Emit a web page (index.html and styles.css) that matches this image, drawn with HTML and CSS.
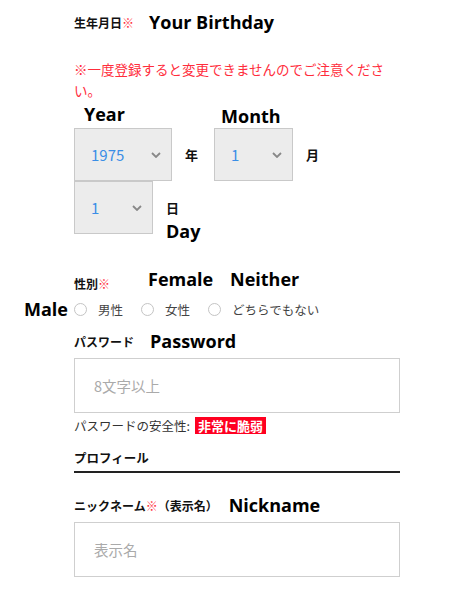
FILE: index.html
```html
<!DOCTYPE html>
<html lang="ja">
<head>
    <meta charset="UTF-8">
    <meta name="viewport" content="width=device-width, initial-scale=1.0">
    <title>会員登録</title>
    <link rel="stylesheet" href="styles.css">
</head>
<body>

<div class="form">
    <!-- birthday -->
    <div class="label-row">
        <span class="field-label">生年月日<span class="req">※</span></span>
        <span class="note-en birthday-en">Your Birthday</span>
    </div>
    <p class="warning">※一度登録すると変更できませんのでご注意ください。</p>

    <div class="date-row">
        <div class="date-group">
            <span class="note-en over year-en">Year</span>
            <div class="select wide"><span>1975</span>
                <svg width="10" height="6" viewBox="0 0 10 6"><path d="M1 1l4 4 4-4" fill="none" stroke="#888" stroke-width="1.8"/></svg>
            </div>
            <span class="unit">年</span>
        </div>
        <div class="date-group">
            <span class="note-en over month-en">Month</span>
            <div class="select"><span>1</span>
                <svg width="10" height="6" viewBox="0 0 10 6"><path d="M1 1l4 4 4-4" fill="none" stroke="#888" stroke-width="1.8"/></svg>
            </div>
            <span class="unit">月</span>
        </div>
        <div class="date-group">
            <div class="select"><span>1</span>
                <svg width="10" height="6" viewBox="0 0 10 6"><path d="M1 1l4 4 4-4" fill="none" stroke="#888" stroke-width="1.8"/></svg>
            </div>
            <span class="unit">日<span class="note-en under">Day</span></span>
        </div>
    </div>

    <!-- gender -->
    <div class="label-row gender-label">
        <span class="field-label">性別<span class="req">※</span></span>
    </div>
    <div class="radio-row">
        <label class="radio"><span class="note-en male-en">Male</span><span class="circle"></span>男性</label>
        <label class="radio"><span class="note-en female-en">Female</span><span class="circle"></span>女性</label>
        <label class="radio"><span class="note-en neither-en">Neither</span><span class="circle"></span>どちらでもない</label>
    </div>

    <!-- password -->
    <div class="label-row pw-label">
        <span class="field-label">パスワード</span>
        <span class="note-en pw-en">Password</span>
    </div>
    <div class="text-input"><span class="placeholder">8文字以上</span></div>
    <div class="strength">パスワードの安全性: <span class="badge">非常に脆弱</span></div>

    <!-- profile -->
    <h3 class="section-title">プロフィール</h3>

    <div class="label-row nick-label">
        <span class="field-label">ニックネーム<span class="req">※</span>（表示名）</span>
        <span class="note-en nick-en">Nickname</span>
    </div>
    <div class="text-input"><span class="placeholder">表示名</span></div>
</div>

</body>
</html>
```

FILE: styles.css
```css
* {
    margin: 0;
    padding: 0;
    box-sizing: border-box;
    font-family: "Noto Sans CJK JP", "Noto Sans", sans-serif;
}

body {
    background: #fff;
    color: #222;
}

.form {
    width: 400px;
    padding-left: 74px;
}

.label-row {
    display: flex;
    align-items: center;
    height: 24px;
    margin-top: 10px;
}

.field-label {
    font-size: 12px;
    font-weight: bold;
    color: #111;
}

.req {
    color: #ff2d3c;
    font-weight: normal;
}

/* english annotations */
.note-en {
    font-family: "Open Sans", "Noto Sans", sans-serif;
    font-weight: bold;
    font-size: 18px;
    line-height: 22px;
    color: #000;
    white-space: nowrap;
}

.birthday-en { margin-left: 15px; }
.pw-en { margin-left: 16px; }
.nick-en { margin-left: 11px; }

.warning {
    margin-top: 25px;
    font-size: 13.5px;
    line-height: 21px;
    color: #ff2d3c;
    padding-right: 10px;
}

.date-row {
    display: flex;
    flex-wrap: wrap;
    column-gap: 16px;
    margin-top: 27px;
}

.date-group {
    position: relative;
    display: flex;
    align-items: center;
}

.note-en.over {
    position: absolute;
    top: -25px;
    left: 10px;
}

.note-en.month-en {
    top: -23px;
    left: 7px;
}

.select {
    display: flex;
    align-items: center;
    justify-content: space-between;
    width: 79px;
    height: 53px;
    padding: 0 10px 0 16px;
    background: #ececec;
    border: 1px solid #c9c9c9;
    font-size: 15px;
    color: #3a8ee6;
}

.select.wide { width: 98px; }

.unit {
    position: relative;
    margin-left: 13px;
    font-size: 13px;
    font-weight: bold;
    color: #111;
}

.note-en.under {
    position: absolute;
    left: 0;
    top: 22px;
}

.gender-label { margin-top: 39px; height: 20px; }

.radio-row {
    display: flex;
    gap: 18px;
    margin-top: 6px;
    height: 20px;
}

.radio {
    position: relative;
    display: flex;
    align-items: center;
    gap: 11px;
    font-size: 12.5px;
    color: #444;
}

.circle {
    width: 13px;
    height: 13px;
    border: 1px solid #c4c4c4;
    border-radius: 50%;
}

.male-en {
    position: absolute;
    left: -50px;
    top: -1px;
}

.female-en,
.neither-en {
    position: absolute;
    top: -31px;
}

.female-en { left: 7px; }
.neither-en { left: 22px; }

.pw-label { margin-top: 10px; height: 24px; }

.text-input {
    display: flex;
    align-items: center;
    height: 55px;
    margin-top: 5px;
    padding-left: 19px;
    border: 1px solid #cfcfcf;
}

.placeholder {
    font-size: 14.5px;
    color: #aaa;
}

.strength {
    display: flex;
    align-items: center;
    gap: 5px;
    margin-top: 3px;
    height: 18px;
    font-size: 12.5px;
    color: #333;
}

.badge {
    background: #ff0020;
    color: #fff;
    font-weight: bold;
    font-size: 13px;
    line-height: 17px;
    padding: 0 3px;
}

.section-title {
    margin-top: 14px;
    padding-bottom: 3px;
    font-size: 12.5px;
    line-height: 20px;
    font-weight: bold;
    color: #111;
    border-bottom: 2px solid #222;
}

.nick-label { margin-top: 20px; }
```
